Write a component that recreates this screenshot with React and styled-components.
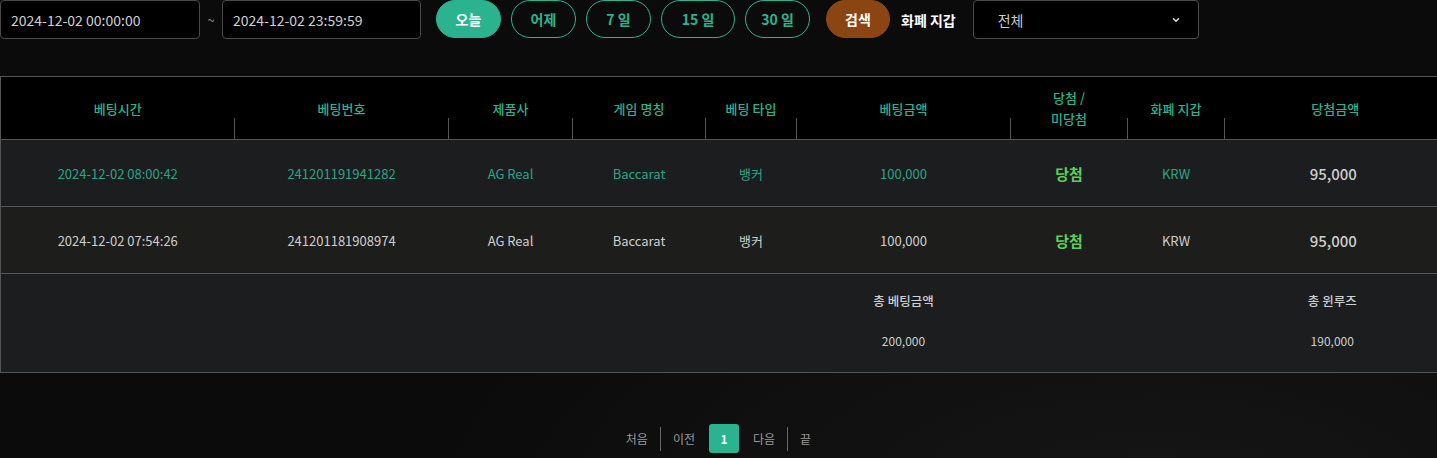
import React from "react";
import styled, { createGlobalStyle } from "styled-components";

const Global = createGlobalStyle`
  html, body { margin: 0; padding: 0; background: #0b0b0b; overflow: hidden; }
  body { font-family: "Noto Sans CJK KR", "Noto Sans", sans-serif; color: #ccc; }
  * { box-sizing: border-box; }
`;

const TEAL = "#2bb390";

const Page = styled.div`
  width: 1437px;
  height: 458px;
  overflow: hidden;
  background: radial-gradient(ellipse at 80% 110%, #161616 0%, #0b0b0b 45%);
`;

const Toolbar = styled.div`
  display: flex;
  align-items: center;
  height: 39px;
`;

const DateInput = styled.div`
  width: ${p => p.$w || 200}px;
  height: 39px;
  border: 1px solid #4a4a4a;
  border-radius: 4px;
  background: #000;
  color: #d0d0d0;
  font-size: 14px;
  display: flex;
  align-items: center;
  padding-left: 10px;
`;

const Tilde = styled.span`
  width: 22px;
  text-align: center;
  color: #888;
  font-size: 13px;
`;

const Pills = styled.div`
  display: flex;
  gap: 10px;
  margin-left: 15px;
`;

const Pill = styled.button`
  width: ${p => p.$w || 65}px;
  height: 38px;
  margin-top: -1px;
  border-radius: 19px;
  border: 1px solid ${p => (p.$variant === "search" ? "#8b4513" : TEAL)};
  background: ${p => (p.$variant === "active" ? TEAL : p.$variant === "search" ? "#8b4513" : "transparent")};
  color: ${p => (p.$variant === "outline" ? TEAL : "#fff")};
  font-family: inherit;
  font-size: 14px;
  font-weight: 700;
  padding: 0;
  margin-left: ${p => p.$ml || 0}px;
`;

const Label = styled.span`
  color: #fff;
  font-size: 14px;
  font-weight: 700;
  margin-left: 11px;
`;

const Select = styled.div`
  width: 226px;
  height: 39px;
  margin-left: 17px;
  border: 1px solid #4a4a4a;
  border-radius: 4px;
  background: #000;
  color: #ccc;
  font-size: 14px;
  display: flex;
  align-items: center;
  justify-content: space-between;
  padding: 0 17px 0 24px;
`;

const Table = styled.table`
  margin-top: 37px;
  width: 1446px;
  border-collapse: collapse;
  table-layout: fixed;
  border: 1px solid #555;
`;

const Th = styled.th`
  position: relative;
  height: 63px;
  background: #000;
  color: ${TEAL};
  font-size: 13px;
  font-weight: 500;
  line-height: 21px;
  padding: 0;
  border-bottom: 1px solid #555;
  &::after {
    content: "";
    display: ${p => (p.$sep ? "block" : "none")};
    position: absolute;
    right: 0;
    top: 41px;
    bottom: 0;
    width: 1px;
    background: #555;
  }
`;

const Row = styled.tr`
  background: ${p => (p.$alt ? "#1d1d1c" : "#1c1d1f")};
  border-bottom: 1px solid #555;
`;

const Td = styled.td`
  height: 67px;
  text-align: center;
  font-size: 13px;
  padding: 0;
  color: ${p => (p.$hl ? "#2ea385" : "#cfcfcf")};
`;

const Win = styled.span`
  color: #5ccf5a;
  font-weight: 700;
  font-size: 15px;
`;

const Amount = styled.span`
  color: #cfcfcf;
  font-weight: 500;
  font-size: 15px;
  position: relative;
  left: -2px;
`;

const SumRow = styled.tr`
  background: #1c1d1f;
`;

const SumCell = styled.td`
  height: 99px;
  padding: 0;
  text-align: center;
  vertical-align: top;
  color: #cfcfcf;
  font-size: 12px;
`;

const SumStack = styled.div`
  display: flex;
  flex-direction: column;
  align-items: center;
  gap: 22px;
  padding-top: 17px;
  padding-right: ${p => p.$pr || 0}px;
`;

const SumTitle = styled.span`
  font-weight: 500;
  font-size: 12.5px;
`;

const Pager = styled.div`
  display: flex;
  justify-content: center;
  align-items: center;
  margin-top: 51px;
  font-size: 12px;
  color: #9a9a9a;
`;

const PageLink = styled.span`
  padding: 0 12px;
  border-right: ${p => (p.$sep ? "1px solid #666" : "none")};
  line-height: 24px;
`;

const PageNum = styled.span`
  width: 30px;
  height: 29px;
  border-radius: 3px;
  background: ${TEAL};
  color: #fff;
  font-weight: 700;
  display: flex;
  align-items: center;
  justify-content: center;
  margin: 0 2px;
`;

const widths = [234, 214, 124, 133, 91, 214, 117, 97, 222];
const headers = ["베팅시간", "베팅번호", "제품사", "게임 명칭", "베팅 타입", "베팅금액", ["당첨 /", "미당첨"], "화폐 지갑", "당첨금액"];

const rows = [
  { hl: true, time: "2024-12-02 08:00:42", id: "241201191941282" },
  { hl: false, time: "2024-12-02 07:54:26", id: "241201181908974" },
];

function Chevron() {
  return (
    <svg width="10" height="10" viewBox="0 0 24 24" fill="none" stroke="#ddd" strokeWidth="3.5" strokeLinecap="round" strokeLinejoin="round">
      <path d="M6 9l6 6 6-6" />
    </svg>
  );
}

export default function App() {
  return (
    <Page>
      <Global />
      <Toolbar>
        <DateInput>2024-12-02 00:00:00</DateInput>
        <Tilde>~</Tilde>
        <DateInput $w={199}>2024-12-02 23:59:59</DateInput>
        <Pills>
          <Pill $variant="active">오늘</Pill>
          <Pill $variant="outline">어제</Pill>
          <Pill $variant="outline">7 일</Pill>
          <Pill $variant="outline" $w={74}>15 일</Pill>
          <Pill $variant="outline">30 일</Pill>
          <Pill $variant="search" $w={64} $ml={6}>검색</Pill>
        </Pills>
        <Label>화폐 지갑</Label>
        <Select>
          <span>전체</span>
          <Chevron />
        </Select>
      </Toolbar>

      <Table>
        <colgroup>
          {widths.map((w, i) => (
            <col key={i} style={{ width: w }} />
          ))}
        </colgroup>
        <thead>
          <tr>
            {headers.map((h, i) => (
              <Th key={i} $sep={i < headers.length - 1}>
                {Array.isArray(h) ? (
                  <>
                    {h[0]}
                    <br />
                    {h[1]}
                  </>
                ) : (
                  h
                )}
              </Th>
            ))}
          </tr>
        </thead>
        <tbody>
          {rows.map((r, i) => (
            <Row key={i} $alt={i % 2 === 1}>
              <Td $hl={r.hl}>{r.time}</Td>
              <Td $hl={r.hl}>{r.id}</Td>
              <Td $hl={r.hl}>AG Real</Td>
              <Td $hl={r.hl}>Baccarat</Td>
              <Td $hl={r.hl}>뱅커</Td>
              <Td $hl={r.hl}>100,000</Td>
              <Td><Win>당첨</Win></Td>
              <Td $hl={r.hl}>KRW</Td>
              <Td><Amount>95,000</Amount></Td>
            </Row>
          ))}
          <SumRow>
            <SumCell colSpan={5} />
            <SumCell>
              <SumStack>
                <SumTitle>총 베팅금액</SumTitle>
                <span>200,000</span>
              </SumStack>
            </SumCell>
            <SumCell colSpan={2} />
            <SumCell>
              <SumStack $pr={6}>
                <SumTitle>총 윈루즈</SumTitle>
                <span>190,000</span>
              </SumStack>
            </SumCell>
          </SumRow>
        </tbody>
      </Table>

      <Pager>
        <PageLink $sep>처음</PageLink>
        <PageLink>이전</PageLink>
        <PageNum>1</PageNum>
        <PageLink $sep>다음</PageLink>
        <PageLink>끝</PageLink>
      </Pager>
    </Page>
  );
}
